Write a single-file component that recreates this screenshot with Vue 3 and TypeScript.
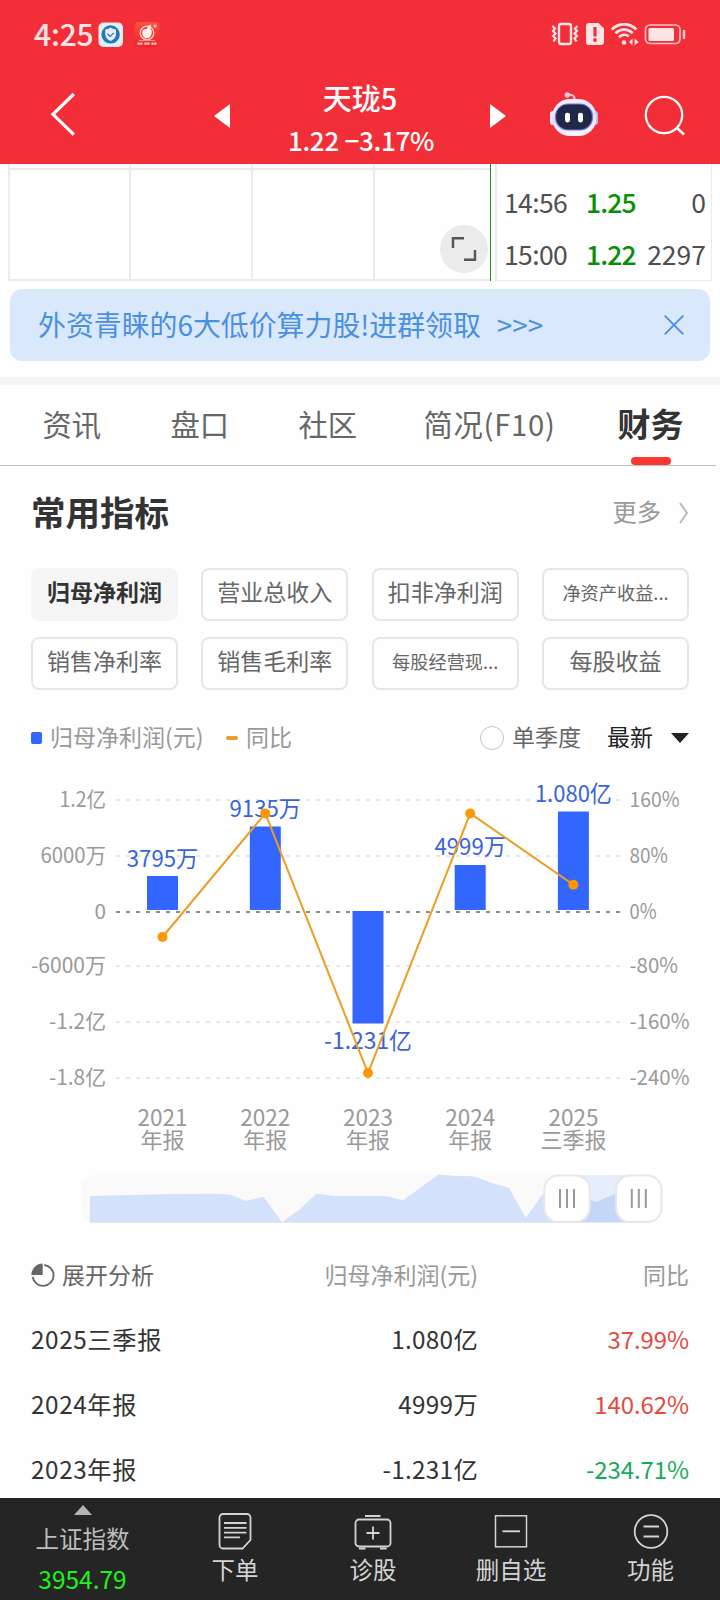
<script setup lang="ts">
interface Tick { y: number; left: string; leftW: number; right: string; rightW: number }
interface Point {
  x: number
  year: string
  period: string
  label: string
  labelY: number
  labelW: number
  top: number
  height: number
  lineY: number
}

const trades = [
  { time: '14:56', price: '1.25', volume: '0' },
  { time: '15:00', price: '1.22', volume: '2297' },
]

const tabs = ['资讯', '盘口', '社区', '简况(F10)', '财务']

const metrics = [
  { name: '归母净利润', active: true },
  { name: '营业总收入' },
  { name: '扣非净利润' },
  { name: '净资产收益...', small: true },
  { name: '销售净利率' },
  { name: '销售毛利率' },
  { name: '每股经营现...', small: true },
  { name: '每股收益' },
]

const ticks: Tick[] = [
  { y: 800, left: '1.2亿', leftW: 46.5, right: '160%', rightW: 50 },
  { y: 856, left: '6000万', leftW: 65.5, right: '80%', rightW: 38.5 },
  { y: 912, left: '0', leftW: 11.5, right: '0%', rightW: 27 },
  { y: 966, left: '-6000万', leftW: 75, right: '-80%', rightW: 48.5 },
  { y: 1022, left: '-1.2亿', leftW: 57, right: '-160%', rightW: 60 },
  { y: 1078, left: '-1.8亿', leftW: 57, right: '-240%', rightW: 60 },
]

const points: Point[] = [
  { x: 162.5, year: '2021', period: '年报', label: '3795万', labelY: 867, labelW: 71.5, top: 876, height: 34, lineY: 937 },
  { x: 265.3, year: '2022', period: '年报', label: '9135万', labelY: 817, labelW: 71.5, top: 826.5, height: 83.5, lineY: 813.4 },
  { x: 368, year: '2023', period: '年报', label: '-1.231亿', labelY: 1049, labelW: 88, top: 911, height: 112.5, lineY: 1073 },
  { x: 470.2, year: '2024', period: '年报', label: '4999万', labelY: 855, labelW: 71.5, top: 865, height: 45, lineY: 813.4 },
  { x: 573.4, year: '2025', period: '三季报', label: '1.080亿', labelY: 802, labelW: 77, top: 811.5, height: 98.5, lineY: 884.7 },
]

const linePath = points.map((p) => `${p.x},${p.lineY}`).join(' ')

const rows = [
  { period: '2025三季报', value: '1.080亿', change: '37.99%', up: true },
  { period: '2024年报', value: '4999万', change: '140.62%', up: true },
  { period: '2023年报', value: '-1.231亿', change: '-234.71%', up: false },
]
</script>

<template>
  <div class="page">
    <header class="header">
      <div class="status">
        <span class="clock">4:25</span>
        <svg class="app-shield" width="26" height="26" viewBox="0 0 26 26">
          <rect x="0.5" y="0.5" width="24.5" height="24.5" rx="5" fill="#e9eef2" />
          <circle cx="12.6" cy="12.4" r="9.2" fill="#1c7bbd" />
          <path d="M12.6 5.6c2 1.4 3.600 1.800 5.400 1.800v4.300c0 3.600-2 5.700-5.400 7.200-3.400-1.500-5.400-3.600-5.400-7.200V7.400c1.800 0 3.400-.4 5.400-1.800z" fill="#e9eef2" />
          <path d="M9.500 11.800l2.700 2.600 3.600-3.500" fill="none" stroke="#1c7bbd" stroke-width="1.300" />
        </svg>
        <svg class="app-stock" width="26" height="26" viewBox="0 0 26 26">
          <defs>
            <linearGradient id="stock" x1="0" y1="0" x2="0" y2="1">
              <stop offset="0" stop-color="#fa4f45" /><stop offset="1" stop-color="#ee2329" />
            </linearGradient>
          </defs>
          <rect x="0.5" y="0" width="25" height="25" rx="4" fill="url(#stock)" />
          <circle cx="13" cy="11" r="6.800" fill="none" stroke="#ffd2c8" stroke-width="1.300" />
          <path d="M8.500 9c1-2 3-2.200 4.500-2 .3-2 1.500-3.700 3.700-4.500.7 1.500.3 3-.5 4.300 1.700 1 2 3.200 1.400 5-.7 2.800-2.300 4.500-4.500 4.500-3.700 0-5.700-3.800-4.600-7.300z" fill="#fff2e9" />
          <circle cx="21" cy="4" r="1.800" fill="#ffb9ae" />
          <path d="M5 18.500h16" stroke="#ff9a8b" stroke-width="1" />
          <path d="M3.500 21.700h19" stroke="#ffd9d3" stroke-width="2.200" stroke-dasharray="2.200 .6 2.200 2" />
        </svg>
        <svg class="signals" width="136" height="26" viewBox="551 22 136 26" fill="none">
          <g stroke="#ffe4e5">
            <rect x="559" y="24" width="12" height="20" rx="2.200" stroke-width="2.400" />
            <path d="M552.500 26l2.500 2.500-2 2.500 2.500 2.500-2.500 2.500 2.500 2.500-2 3M577.500 26l-2.500 2.500 2 2.500-2.500 2.500 2.500 2.500-2.500 2.500 2 3" stroke-width="2.200" />
          </g>
          <path d="M589 23h9.500l5.500 5.500V42a3 3 0 0 1-3 3h-12a3 3 0 0 1-3-3V26a3 3 0 0 1 3-3z" fill="#ffe4e5" />
          <path d="M595 27v9.500" stroke="#f22f38" stroke-width="3.200" />
          <circle cx="595" cy="40" r="1.900" fill="#f22f38" />
          <g stroke="#ffe4e5" stroke-width="2.700">
            <path d="M611.800 29.500c6.800-6.800 17.800-6.800 24.600 0M615.500 33.300c5-5 12.200-5 17.200 0M619 37.200c3-2.800 7-2.900 9.800-.8" />
          </g>
          <circle cx="624" cy="42.500" r="2.300" fill="#ffe4e5" />
          <path d="M632.500 38.500v7l-3.500-3.500zM634.500 38.500v7l4-3.500z" fill="#ffe4e5" />
          <rect x="645.500" y="25" width="34.500" height="18.500" rx="4.500" stroke="#ffc3c6" stroke-width="1.700" />
          <rect x="648.500" y="28" width="25.500" height="13" rx="1.500" fill="#ffe4e5" />
          <path d="M684 30v9" stroke="#ffc3c6" stroke-width="2.500" />
        </svg>
      </div>
      <div class="nav">
        <svg class="back" width="28" height="46" viewBox="49 91 28 46">
          <path d="M73.800 94L53 114.300l20.800 20.300" fill="none" stroke="#fff" stroke-width="3.200" />
        </svg>
        <svg class="prev" width="16" height="24" viewBox="0 0 16 24"><path d="M0 12L16 0v24z" fill="#fff" /></svg>
        <div class="quote">
          <div class="stock-name">天珑5</div>
          <div class="stock-price">1.22 −3.17%</div>
        </div>
        <svg class="next" width="16" height="24" viewBox="0 0 16 24"><path d="M16 12L0 0v24z" fill="#fff" /></svg>
        <svg class="robot" width="50" height="48" viewBox="549 90 50 48">
          <defs>
            <linearGradient id="head" x1="0" y1="0" x2="0.300" y2="1">
              <stop offset="0" stop-color="#fff1f6" /><stop offset="0.600" stop-color="#dfe0fb" /><stop offset="1" stop-color="#f7f4ff" />
            </linearGradient>
          </defs>
          <path d="M567.500 95c4-1 7.500 0 7 5" fill="none" stroke="#f7c3dc" stroke-width="2" />
          <circle cx="567.300" cy="95" r="2.700" fill="#f7c9df" />
          <rect x="550" y="111" width="6" height="14" rx="3" fill="#f0e9fc" />
          <rect x="592" y="111" width="6" height="14" rx="3" fill="#b9b5ef" />
          <rect x="552" y="99" width="44.500" height="37" rx="18" fill="url(#head)" />
          <rect x="555.500" y="104" width="37" height="26" rx="12.500" fill="#202848" stroke="#8076dc" stroke-width="1.200" />
          <rect x="565" y="112.700" width="5" height="9.700" rx="2.300" fill="#fff" />
          <rect x="578" y="112.700" width="5" height="9.700" rx="2.300" fill="#fff" />
        </svg>
        <svg class="search" width="42" height="42" viewBox="643 94 42 42" fill="none" stroke="#fff">
          <circle cx="663" cy="115" r="18.200" stroke-width="2.200" />
          <path d="M675.500 127.500l7.500 7" stroke-width="2.500" />
        </svg>
      </div>
    </header>

    <section class="intraday">
      <div class="plot">
        <div class="plot-head"><i /><i /><i /><i /></div>
        <div class="plot-body"><i /><i /><i /><i /></div>
        <div class="expand">
          <svg width="26" height="26" viewBox="0 0 26 26" fill="none" stroke="#555" stroke-width="2.400">
            <path d="M2 12V2.200h11M24 14v9.800H13" />
          </svg>
        </div>
      </div>
      <div class="trades">
        <div v-for="t in trades" :key="t.time" class="trade">
          <span class="time">{{ t.time }}</span>
          <span class="price">{{ t.price }}</span>
          <span class="volume">{{ t.volume }}</span>
        </div>
      </div>
    </section>

    <div class="banner">
      <span>外资青睐的6大低价算力股!进群领取</span><span class="arrows">&gt;&gt;&gt;</span>
      <svg width="20" height="20" viewBox="0 0 20 20"><path d="M.7.7l18.600 18.600M19.300.7L.7 19.300" stroke="#4a90e2" stroke-width="1.900" /></svg>
    </div>

    <nav class="tabs">
      <div v-for="(t, i) in tabs" :key="t" class="tab" :class="['tab-' + i, { current: i === 4 }]">{{ t }}</div>
    </nav>

    <section class="heading">
      <h2>常用指标</h2>
      <span class="more">更多</span>
      <svg width="10" height="22" viewBox="0 0 10 22"><path d="M1 1l7 10-7 10" fill="none" stroke="#b5b5b5" stroke-width="1.800" /></svg>
    </section>

    <section class="chips">
      <div v-for="m in metrics" :key="m.name" class="chip" :class="{ active: m.active, small: m.small }">{{ m.name }}</div>
    </section>

    <section class="legend">
      <i class="square" /><span class="series">归母净利润(元)</span>
      <i class="dash" /><span>同比</span>
      <i class="radio" /><span class="quarter">单季度</span>
      <span class="latest">最新</span>
      <svg width="18" height="10" viewBox="0 0 18 10"><path d="M0 0h18L9 10z" fill="#222" /></svg>
    </section>

    <svg class="chart" width="720" height="400" viewBox="0 760 720 400">
      <g class="axis">
        <g v-for="t in ticks" :key="t.y">
          <line x1="116" x2="620" :y1="t.y" :y2="t.y" :class="{ zero: t.left === '0' }" />
          <text x="106" :y="t.y + 7" text-anchor="end" :textLength="t.leftW" lengthAdjust="spacingAndGlyphs">{{ t.left }}</text>
          <text x="629.500" :y="t.y + 7" :textLength="t.rightW" lengthAdjust="spacingAndGlyphs">{{ t.right }}</text>
        </g>
      </g>
      <g v-for="p in points" :key="p.year">
        <rect :x="p.x - 15.500" :y="p.top" width="31" :height="p.height" fill="#36f" />
        <text class="value" :x="p.x" :y="p.labelY" :textLength="p.labelW" lengthAdjust="spacingAndGlyphs">{{ p.label }}</text>
        <text class="category" :x="p.x" y="1126">{{ p.year }}<tspan class="period" :x="p.x" dy="22">{{ p.period }}</tspan></text>
      </g>
      <polyline :points="linePath" fill="none" stroke="#eb9e22" stroke-width="2" />
      <circle v-for="p in points" :key="p.x" :cx="p.x" :cy="p.lineY" r="5" fill="#ff9800" />
    </svg>

    <svg class="range" width="720" height="64" viewBox="0 1168 720 64">
      <rect x="81" y="1175" width="581" height="47.500" rx="14" fill="#fafafa" />
      <rect x="567" y="1175" width="72" height="47.500" fill="#e6eefb" />
      <path d="M90 1222.500V1196l53-1.300 32-.7 37-.2 18 1 16.600 6.200 17-4.300L282 1222.300l18-13.300 16.200-15.200 18.600 2.200h51.400l17 4.300 35.200-25.900 17 1.600 17.800.3 17.800 6.400 17.800 5 17 30 17.400-24 24 8v20.800z" fill="#d3e1fa" />
      <path d="M567 1222.500V1196l10-2 18.800 8 19.700-8.300 23.500-2v30.800z" fill="#c5d7f9" />
      <path d="M90 1222.500h550" stroke="#e3e9f4" stroke-width="1" />
      <g v-for="x in [567, 638.800]" :key="x">
        <rect :x="x - 22.700" y="1175.500" width="45.400" height="46.500" rx="14" fill="#fff" stroke="#e7e7e7" stroke-width="2" />
        <path :d="`M${x - 7} 1189v19M${x} 1189v19M${x + 7} 1189v19`" stroke="#999" stroke-width="2" />
      </g>
    </svg>

    <section class="table">
      <div class="row table-head">
        <span class="expand-analysis">
          <svg width="24" height="24" viewBox="0 0 24 24">
            <path d="M13.300 2A10.500 10.500 0 1 1 1.700 14" fill="none" stroke="#666" stroke-width="1.800" />
            <path d="M11.700 12H.3a11.400 11.400 0 0 1 11.400-11.400z" fill="#666" />
          </svg>
          展开分析
        </span>
        <span>归母净利润(元)</span>
        <span>同比</span>
      </div>
      <div v-for="r in rows" :key="r.period" class="row">
        <span class="wide">{{ r.period }}</span>
        <span class="amount">{{ r.value }}</span>
        <span class="change" :class="r.up ? 'up' : 'down'">{{ r.change }}</span>
      </div>
    </section>

    <footer class="bottom">
      <div class="item index">
        <svg width="18" height="10" viewBox="0 0 18 10"><path d="M0 10L9 0l9 10z" fill="#b4b4b4" /></svg>
        <span class="index-name">上证指数</span>
        <span class="index-value">3954.79</span>
      </div>
      <div class="item">
        <svg width="38" height="38" viewBox="0 0 38 38" fill="none" stroke="#d4d4d4" stroke-width="1.800">
          <path d="M7 2h24a3.500 3.500 0 0 1 3.500 3.500V28l-8 8.500H7A3.500 3.500 0 0 1 3.500 33V5.500A3.500 3.500 0 0 1 7 2zM8 11h22.500M8 15.800h22.500M8 20.600h22.500M8 25.300h16" />
        </svg>
        <span>下单</span>
      </div>
      <div class="item">
        <svg width="38" height="38" viewBox="0 0 38 38" fill="none" stroke="#d4d4d4" stroke-width="1.800">
          <rect x="1.500" y="7.500" width="35" height="27" rx="3.500" />
          <path d="M11 4h15.500M5 36.500h6.500M26 36.500h6.500M19 14.500v13M12.500 21h13" />
        </svg>
        <span>诊股</span>
      </div>
      <div class="item">
        <svg width="38" height="38" viewBox="0 0 38 38" fill="none" stroke="#d4d4d4" stroke-width="1.500">
          <rect x="3.500" y="3.800" width="31" height="31" />
          <path d="M10.500 19.300h17.500" stroke-width="1.900" />
        </svg>
        <span>删自选</span>
      </div>
      <div class="item">
        <svg width="38" height="38" viewBox="0 0 38 38" fill="none" stroke="#d4d4d4" stroke-width="1.800">
          <circle cx="19" cy="19.500" r="16.300" />
          <path d="M11.500 14.500h15.500M11.500 24.500h15.500" />
        </svg>
        <span>功能</span>
      </div>
    </footer>
  </div>
</template>

<style scoped>
.page {
  width: 720px;
  height: 1600px;
  overflow: hidden;
  display: flex;
  flex-direction: column;
  background: #fefefe;
  color: #333;
  font-family: "Noto Sans CJK SC", sans-serif;
}
svg { display: block; flex: none; }
i { display: block; flex: none; }

.header { height: 164px; flex: none; background: #f22f38; color: #fff; }
.status { display: flex; height: 70px; padding-left: 34px; align-items: flex-start; }
.clock { width: 64px; margin-top: 13px; font-size: 30px; line-height: 40px; color: #ffe4e5; font-weight: 500; letter-spacing: -.2px; }
.app-shield { margin-top: 22px; }
.app-stock { margin: 22px 0 0 10px; }
.signals { margin: 22px 0 0 391px; }
.nav { display: flex; height: 94px; align-items: flex-start; padding-left: 49px; }
.back { margin-top: 21px; }
.prev { margin: 34px 0 0 137px; }
.quote { width: 260px; text-align: center; font-weight: 500; }
.stock-name { margin-top: 4px; font-size: 29px; line-height: 46px; }
.stock-price { margin-top: 1px; padding-left: 2px; font-size: 26px; line-height: 38px; letter-spacing: -.3px; }
.next { margin-top: 34px; }
.robot { margin: 20px 0 0 43px; }
.search { margin: 24px 0 0 45px; }

.intraday { display: flex; height: 117px; flex: none; padding-left: 8px; }
.plot { position: relative; width: 482px; border-right: 1px solid #229322; }
.plot-head, .plot-body { display: flex; border-bottom: 2px solid #ebebeb; }
.plot-head { height: 4px; }
.plot-body { height: 109px; }
.plot-head i, .plot-body i { width: 120px; border-left: 2px solid #ebebeb; }
.plot-head i:first-child, .plot-body i:first-child { width: 119px; }
.expand {
  position: absolute; left: 432px; top: 61px; width: 48px; height: 48px; border-radius: 50%;
  background: #ebebeb; display: flex; align-items: center; justify-content: center;
}
.trades { width: 214px; height: 102px; margin-left: 4px; padding-top: 14px; border: solid #ebebeb; border-width: 0 1px 1px 2px; font-size: 26.500px; }
.trade { display: flex; height: 52px; line-height: 48px; padding: 0 5px 0 7px; color: #4f4f4f; }
.time { width: 82px; letter-spacing: -.6px; }
.price { color: #078f07; font-weight: 500; flex: 1; letter-spacing: -.9px; }

.banner {
  display: flex; align-items: center; flex: none; height: 72px; margin: 8px 10px 0; padding: 0 26px 0 28px;
  border-radius: 12px; background: #dae8fb; color: #4a90e2; font-size: 27.900px;
}
.banner span { margin-bottom: 2px; white-space: nowrap; }
.banner .arrows { margin-left: 16px; }
.banner svg { margin-left: auto; }

.tabs {
  display: flex; flex: none; height: 81px; margin-top: 16px; border-top: 8px solid #f4f4f4;
  background: linear-gradient(#bfbfbf, #bfbfbf) 0 100% / 716px 1px no-repeat;
}
.tab { position: relative; font-size: 29.300px; line-height: 77px; color: #666; white-space: nowrap; }
.tab-0 { margin-left: 42.500px; }
.tab-1, .tab-2 { margin-left: 69.400px; }
.tab-3 { margin-left: 66.500px; letter-spacing: .7px; }
.tab-4 { margin-left: 62px; }
.tab.current { font-size: 33px; font-weight: 700; color: #333; }
.tab.current::after { content: ""; position: absolute; left: 13px; bottom: 1px; width: 40px; height: 8px; border-radius: 4px; background: #fa382f; }

.heading { display: flex; flex: none; height: 102px; align-items: flex-start; padding: 0 31px 0 31px; }
h2 { margin: 15px auto 0 0; font-size: 34.500px; line-height: 60px; font-weight: 700; }
.more { margin-top: 20px; font-size: 24.300px; line-height: 50px; color: #999; }
.heading svg { margin: 36px 0 0 18px; }

.chips { display: grid; flex: none; grid-template-columns: repeat(4, 147px); justify-content: space-between; row-gap: 16px; padding: 0 31px; }
.chip { height: 53px; box-sizing: border-box; border: 2px solid #e6e6e6; border-radius: 8px; font-size: 23px; line-height: 42px; text-align: center; color: #666; white-space: nowrap; }
.chip.small { font-size: 18.200px; line-height: 44px; }
.chip.active { border-color: #f5f5f5; background: #f5f5f5; color: #333; font-weight: 700; }

.legend { display: flex; flex: none; align-items: center; height: 45px; padding: 25px 31px 0; font-size: 23px; color: #999; }
.legend span { line-height: 40px; margin-top: -3px; }
.square { width: 11px; height: 12px; background: #36f; border-radius: 2px; margin-right: 8px; }
.series { width: 154px; }
.dash { width: 12px; height: 4px; border-radius: 2px; background: #eb9e22; margin: 0 8px 0 22px; }
.radio { width: 22px; height: 22px; border: 1px solid #c4c4c4; border-radius: 50%; margin-left: auto; margin-right: 8px; }
.legend .quarter { color: #666; margin-right: 26px; }
.legend .latest { color: #222; margin-right: 18px; }

.chart { font-size: 23px; }
.axis line { stroke: #e6e6e6; stroke-width: 2; stroke-dasharray: 4 6; }
.axis line.zero { stroke: #8c8c8c; }
.axis text { font-size: 21px; fill: #999; }
.value { fill: #3864d8; text-anchor: middle; }
.category { fill: #999; text-anchor: middle; font-size: 22.500px; }
.period { font-size: 22px; }
.range { margin-top: 8px; }

.table { flex: 1; min-height: 0; padding: 10px 31px 0; font-size: 24.300px; }
.row { display: grid; grid-template-columns: 210px 237px 211px; height: 65px; line-height: 65px; white-space: nowrap; }
.row span + span { text-align: right; }
.table-head { font-size: 23px; color: #999; height: 64px; }
.expand-analysis { display: flex; align-items: center; gap: 7px; color: #666; }
.wide { letter-spacing: .6px; }
.amount { letter-spacing: .3px; }
.change { font-size: 24px; letter-spacing: -.1px; }
.up { color: #e34a40; }
.down { color: #19aa59; }

.bottom { display: grid; grid-template-columns: 165px 140px 136px 140px 139px; flex: none; height: 102px; background: #252525; color: #d4d4d4; }
.item { display: flex; flex-direction: column; align-items: center; padding-top: 14px; font-size: 23.500px; line-height: 38px; }
.index { padding-top: 7px; }
.index-name { margin-top: 3px; color: #bdbdbd; line-height: 40px; }
.index-value { color: #1cf41c; font-size: 24.500px; line-height: 42px; }
</style>

<style>
body { margin: 0; background: #fefefe; }
</style>
